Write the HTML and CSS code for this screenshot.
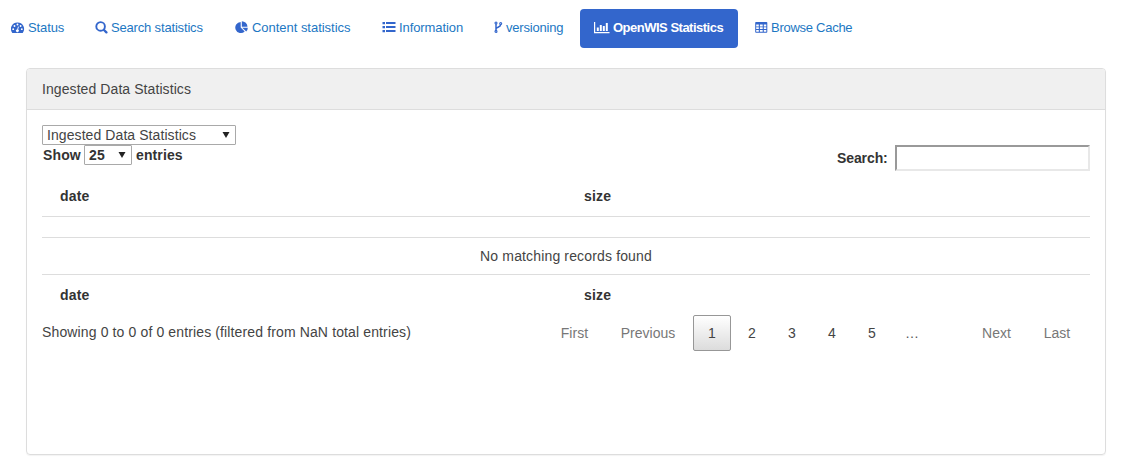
FILE: index.html
```html
<!DOCTYPE html>
<html lang="en">
<head>
<meta charset="utf-8">
<title>OpenWIS Statistics</title>
<link rel="stylesheet" href="styles.css">
</head>
<body>
<nav class="tabs">
  <a class="tab tab-status"><svg class="icon" width="14" height="12" viewBox="0 0 14 12"><path fill="currentColor" fill-rule="evenodd" d="M6.500 .5a6.400 6.400 0 0 1 5.500 9.900q-.2.500-.7.500H1.700q-.5 0-.7-.5A6.400 6.400 0 0 1 6.500 .5zM2.200 6.200a.95.95 0 1 0 0 1.900a.95.95 0 1 0 0-1.900zM3.500 3a.95.95 0 1 0 0 1.900a.95.95 0 1 0 0-1.900zM6.500 1.600a.95.95 0 1 0 0 1.900a.95.95 0 1 0 0-1.900zM9.600 3a.95.95 0 1 0 0 1.900a.95.95 0 1 0 0-1.900zM10.800 6.200a.95.95 0 1 0 0 1.900a.95.95 0 1 0 0-1.900zM7 4.500l-.8 2.900a1.400 1.400 0 1 0 .9.200l.8-2.900z"/></svg><span>Status</span></a>
  <a class="tab tab-search"><svg class="icon" width="13" height="13" viewBox="0 0 13 13"><g fill="none" stroke="currentColor"><circle cx="5.600" cy="5.400" r="4.300" stroke-width="1.900"/><path d="M9 9l2.400 2.400" stroke-width="2.300" stroke-linecap="round"/></g></svg><span>Search statistics</span></a>
  <a class="tab tab-content"><svg class="icon" width="13" height="13" viewBox="0 0 13 13"><g fill="currentColor"><path d="M5.700.9v5.700l4 4A5.600 5.600 0 1 1 5.700.9z"/><path d="M6.800.3a5.700 5.700 0 0 1 5.700 5.400H6.800z"/><path d="M7.200 6.700h5.600a5.600 5.600 0 0 1-1.600 3.900z"/></g></svg><span>Content statistics</span></a>
  <a class="tab tab-info"><svg class="icon" width="14" height="13" viewBox="0 0 14 13"><path fill="currentColor" d="M.5 1H3v2.200H.5zM4 1h9.500v2H4zM.5 5H3v2.200H.5zM4 5h9.500v2H4zM.5 9H3v2.200H.5zM4 9h9.500v2H4z"/></svg><span>Information</span></a>
  <a class="tab tab-version"><svg class="icon" width="9" height="13" viewBox="0 0 9 13"><g fill="none" stroke="currentColor" stroke-width="1.100"><circle cx="2" cy="2" r="1"/><circle cx="6.700" cy="2.500" r="1"/><circle cx="2" cy="10.400" r="1"/><path stroke-width="1.500" d="M2 3v6.400M6.700 3.600c0 3-4.500 2.300-4.700 4.400"/></g></svg><span>versioning</span></a>
  <a class="tab tab-openwis active"><svg class="icon" width="16" height="13" viewBox="0 0 16 13"><path fill="currentColor" d="M0 1h1.200v10H15.500v1.200H0zM2.800 6.500h2V10h-2zM5.800 4h2v6h-2zM8.800 5h2v5h-2zM11.800 2h2v8h-2z"/></svg><span>OpenWIS Statistics</span></a>
  <a class="tab tab-cache"><svg class="icon" width="13" height="13" viewBox="0 0 13 13"><path fill="currentColor" fill-rule="evenodd" d="M1 1h10.500q.8 0 .8.800v9q0 .9-.8.900H1q-.8 0-.8-.9v-9Q.2 1 1 1zM1.200 3.500v1.900h2.600V3.500zM4.900 3.500v1.900h2.800V3.500zM8.800 3.500v1.900h2.500V3.500zM1.200 6.300v1.800h2.600V6.300zM4.900 6.300v1.800h2.800V6.300zM8.800 6.300v1.800h2.500V6.300zM1.200 9v1.700h2.600V9zM4.900 9v1.700h2.800V9zM8.800 9v1.700h2.500V9z"/></svg><span>Browse Cache</span></a>
</nav>
<main class="panel">
  <header class="panel-head">Ingested Data Statistics</header>
  <div class="panel-body">
    <div class="select select-report"><span>Ingested Data Statistics</span><svg width="8" height="6" viewBox="0 0 8 6"><path fill="#222" d="M.5 0h7L4 6z"/></svg></div>
    <div class="controls">
      <div class="length"><span class="w-show">Show</span><div class="select select-length"><span>25</span><svg width="8" height="6" viewBox="0 0 8 6"><path fill="#222" d="M.5 0h7L4 6z"/></svg></div><span class="w-entries">entries</span></div>
      <label class="search"><span class="w-search">Search:</span><input class="search-input" type="text"></label>
    </div>
    <div class="row row-head"><span class="w-date">date</span><span class="w-size">size</span></div>
    <div class="row-gap"></div>
    <div class="row-empty"><span>No matching records found</span></div>
    <div class="row row-foot"><span class="w-date">date</span><span class="w-size">size</span></div>
    <div class="footer">
      <span class="summary">Showing 0 to 0 of 0 entries (filtered from NaN total entries)</span>
      <div class="pages">
        <a class="page muted first">First</a><a class="page muted previous">Previous</a><a class="page current">1</a><a class="page">2</a><a class="page">3</a><a class="page">4</a><a class="page">5</a><span class="page muted dots">…</span><a class="page muted next">Next</a><a class="page muted last">Last</a>
      </div>
    </div>
  </div>
</main>
</body>
</html>
```
FILE: styles.css
```css
* { box-sizing: border-box; }
body {
  margin: 0;
  padding-top: 9px;
  height: 465px;
  overflow: hidden;
  background: #fff;
  color: #444;
  font: 14px/20px "Liberation Sans", Arial, sans-serif;
  white-space: nowrap;
}
.tabs { display: flex; gap: 2px; margin-left: -4px; height: 39px; font-size: 13px; }
.tab { display: flex; align-items: center; gap: 3px; padding: 0 0 2px 15px; color: #1c77c3; border-radius: 4px; }
.icon { flex: none; color: #36c; }
.tab-status { width: 82px; letter-spacing: -.1px; }
.tab-search { width: 138px; letter-spacing: -.17px; }
.tab-content { width: 145px; gap: 4px; letter-spacing: -.03px; }
.tab-info { width: 110px; letter-spacing: -.09px; }
.tab-version { width: 99px; letter-spacing: -.2px; }
.tab-openwis { width: 158px; padding-left: 14px; letter-spacing: -.5px; }
.tab-cache { letter-spacing: -.27px; }
.active { background: #36c; color: #fff; font-weight: bold; }
.active .icon { color: #fff; }
.panel { margin: 20px 17px 0 26px; height: 387px; border: 1px solid #ddd; border-radius: 4px; box-shadow: 0 1px 1px rgba(0,0,0,.05); }
.panel-head { height: 41px; padding: 10px 15px; background: #f0f0f0; border-bottom: 1px solid #ddd; border-radius: 3px 3px 0 0; letter-spacing: .08px; }
.panel-body { padding: 15px; }
.select { display: flex; align-items: center; justify-content: space-between; height: 20px; padding: 0 5px 0 4px; border: 1px solid #a9a9a9; border-radius: 1px; background: #fff; }
.select-report { width: 194px; letter-spacing: .08px; }
.controls { display: flex; justify-content: space-between; height: 33px; font-weight: bold; color: #333; }
.length { display: flex; height: 20px; letter-spacing: .12px; }
.w-show { width: 42px; padding-left: 1px; }
.select-length { width: 48px; margin-right: 4px; }
.search { display: flex; align-items: center; height: 26px; }
.w-search { width: 58px; letter-spacing: -.1px; }
.search-input { width: 195px; height: 26px; border: 2px solid; border-color: #999 #e8e8e8 #e8e8e8 #999; background: #fff; }
.row { display: grid; grid-template-columns: 524px 1fr; padding: 0 18px; font-weight: bold; color: #333; letter-spacing: .2px; }
.row-head { height: 39px; padding-top: 8px; border-bottom: 1px solid #ddd; }
.row-gap { height: 21px; border-bottom: 1px solid #ddd; }
.row-empty { height: 37px; padding-top: 8px; text-align: center; border-bottom: 1px solid #ddd; letter-spacing: .15px; }
.row-foot { height: 40px; padding-top: 10px; }
.footer { display: flex; justify-content: space-between; height: 36px; }
.summary { padding-top: 7px; letter-spacing: .13px; }
.pages { display: flex; gap: 2px; }
.page { width: 38px; height: 36px; line-height: 36px; text-align: center; }
.muted { color: #777; }
.first { width: 60px; padding-left: 3px; letter-spacing: .1px; }
.previous { width: 86px; }
.current { line-height: 34px; border: 1px solid #979797; border-radius: 2px; background: linear-gradient(#fff, #dcdcdc); }
.dots { color: #555; }
.next { width: 61px; margin-left: 33px; }
.last { width: 56px; margin-right: 5px; }
```
